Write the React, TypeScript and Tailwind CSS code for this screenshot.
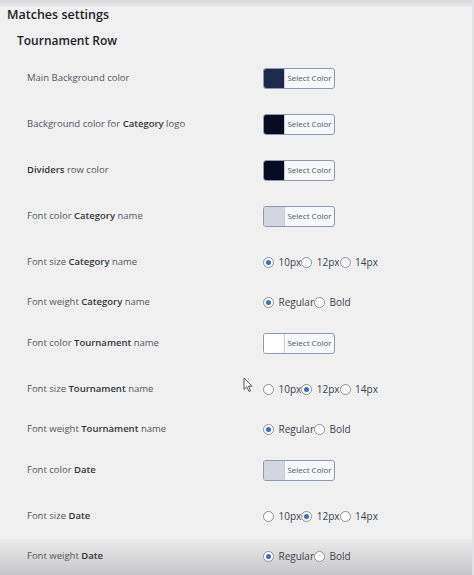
import React from 'react'

type Row =
  | { kind: 'color'; label: React.ReactNode; color: string; h: number }
  | { kind: 'radio'; label: React.ReactNode; options: string[]; value: string; h: number }

const sizes = ['10px', '12px', '14px']
const weights = ['Regular', 'Bold']

const rows: Row[] = [
  { kind: 'color', label: <>Main Background color</>, color: '#1f2a4b', h: 46 },
  { kind: 'color', label: <>Background color for <b className="font-semibold text-[#32373c]">Category</b> logo</>, color: '#080a22', h: 46 },
  { kind: 'color', label: <><b className="font-semibold text-[#32373c]">Dividers</b> row color</>, color: '#080a22', h: 46 },
  { kind: 'color', label: <>Font color <b className="font-semibold text-[#32373c]">Category</b> name</>, color: '#d3d6e0', h: 46 },
  { kind: 'radio', label: <>Font size <b className="font-semibold text-[#32373c]">Category</b> name</>, options: sizes, value: '10px', h: 46 },
  { kind: 'radio', label: <>Font weight <b className="font-semibold text-[#32373c]">Category</b> name</>, options: weights, value: 'Regular', h: 34 },
  { kind: 'color', label: <>Font color <b className="font-semibold text-[#32373c]">Tournament</b> name</>, color: '#ffffff', h: 48 },
  { kind: 'radio', label: <>Font size <b className="font-semibold text-[#32373c]">Tournament</b> name</>, options: sizes, value: '12px', h: 44 },
  { kind: 'radio', label: <>Font weight <b className="font-semibold text-[#32373c]">Tournament</b> name</>, options: weights, value: 'Regular', h: 36 },
  { kind: 'color', label: <>Font color <b className="font-semibold text-[#32373c]">Date</b></>, color: '#d3d6e0', h: 46 },
  { kind: 'radio', label: <>Font size <b className="font-semibold text-[#32373c]">Date</b></>, options: sizes, value: '12px', h: 46 },
  { kind: 'radio', label: <>Font weight <b className="font-semibold text-[#32373c]">Date</b></>, options: weights, value: 'Regular', h: 34 },
]

function ColorButton({ color }: { color: string }) {
  return (
    <button
      type="button"
      className="flex h-[21px] w-[72px] overflow-hidden rounded-[3px] border border-[#8a9ab3] bg-[#f7f8fa]"
    >
      <span className="h-full w-[21px] shrink-0 border-r border-[#c9ced6]" style={{ background: color }} />
      <span className="flex-1 self-center text-center text-[8px] leading-none text-[#50575e]">Select Color</span>
    </button>
  )
}

function Radio({ checked }: { checked: boolean }) {
  return (
    <span className="flex h-[11px] w-[11px] shrink-0 items-center justify-center rounded-full border border-[#8c8f94] bg-white">
      {checked && <span className="h-[5px] w-[5px] rounded-full bg-[#3b6fb0]" />}
    </span>
  )
}

function RadioGroup({ options, value }: { options: string[]; value: string }) {
  return (
    <div className="flex items-center text-[10px] text-[#3c434a]">
      {options.map((o) => (
        <label key={o} className="flex items-center">
          <Radio checked={o === value} />
          <span className="ml-[4.5px]">{o}</span>
        </label>
      ))}
    </div>
  )
}

export default function App() {
  return (
    <div
      className="relative h-[575px] w-[474px] overflow-hidden bg-[#f0f0f1] text-[#50575e]"
      style={{ fontFamily: '"Open Sans", "Noto Sans", sans-serif' }}
    >
      {/* bottom shading sits behind the rows */}
      <div className="pointer-events-none absolute inset-x-0 bottom-0 h-[36px] bg-gradient-to-b from-[#ececed] to-[#c6c6c8]" />
      <div className="absolute inset-y-0 right-0 w-[2px] bg-[#e2e2e4]" />

      <div className="h-[7px] bg-gradient-to-b from-[#d9d9db] to-[#e9e9ea]" />
      <h2 className="px-[7px] text-[12.5px] leading-[16px] font-semibold text-[#1d2327]">Matches settings</h2>
      <h3 className="mt-[10px] px-[17px] text-[12px] leading-[16px] font-semibold text-[#1d2327]">Tournament Row</h3>

      <div className="relative mt-[6px]">
        {rows.map((r, i) => (
          <div key={i} className="flex items-center" style={{ height: r.h }}>
            <div className="w-[263px] shrink-0 pl-[27px] text-[9.5px] text-[#50575e]">{r.label}</div>
            {r.kind === 'color' ? (
              <ColorButton color={r.color} />
            ) : (
              <RadioGroup options={r.options} value={r.value} />
            )}
          </div>
        ))}
      </div>

      {/* mouse pointer */}
      <svg className="absolute left-[243px] top-[377px]" width="10" height="16" viewBox="0 0 10 16">
        <path d="M1 1 L1 12.5 L3.8 9.8 L6 14.5 L7.6 13.8 L5.5 9.2 L9 9.2 Z" fill="#fff" stroke="#3c434a" strokeWidth="0.9" strokeLinejoin="round" />
      </svg>
    </div>
  )
}
